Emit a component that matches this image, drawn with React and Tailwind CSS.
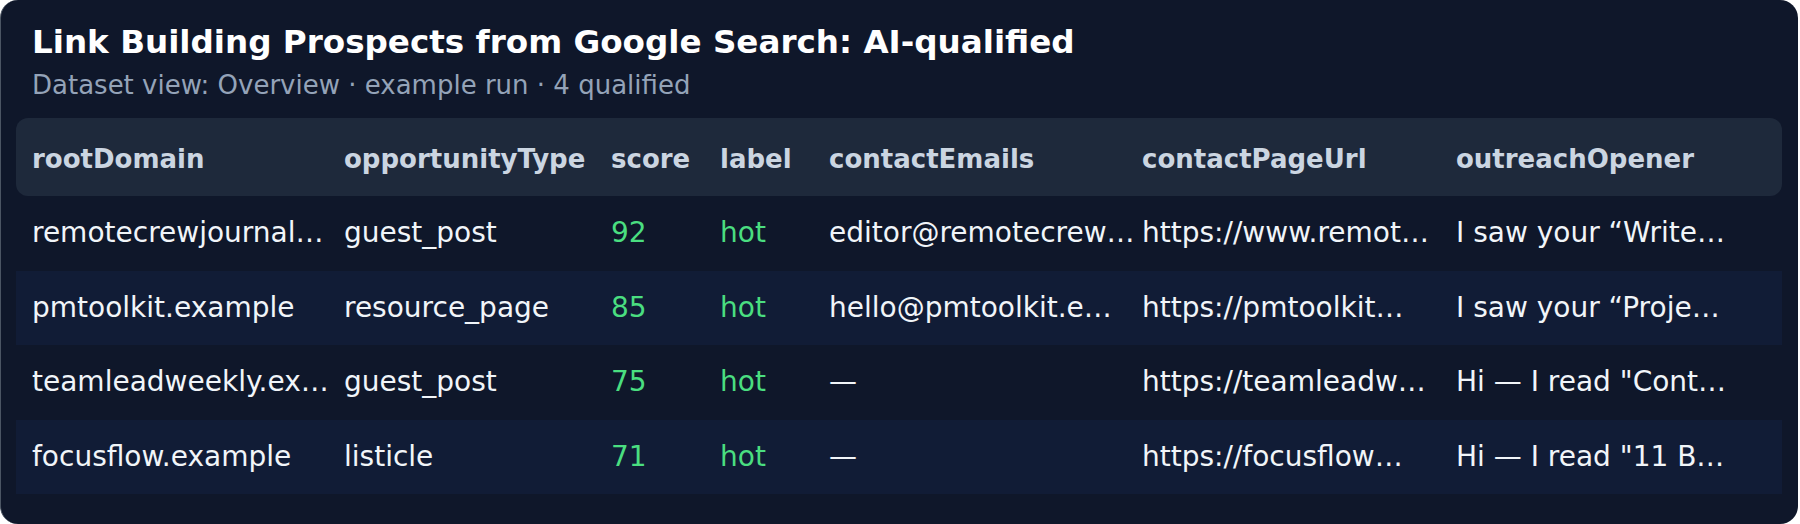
import React from 'react';

const cols = [
  { key: 'rootDomain', w: 'w-[312px]' },
  { key: 'opportunityType', w: 'w-[267px]' },
  { key: 'score', w: 'w-[109px]' },
  { key: 'label', w: 'w-[109px]' },
  { key: 'contactEmails', w: 'w-[313px]' },
  { key: 'contactPageUrl', w: 'w-[314px]' },
  { key: 'outreachOpener', w: 'flex-1' },
];

const rows = [
  ['remotecrewjournal.example', 'guest_post', 92, 'hot', 'editor@remotecrewjournal.example', 'https://www.remotecrewjournal.example/write-for-us', 'I saw your “Write for us” page'],
  ['pmtoolkit.example', 'resource_page', 85, 'hot', 'hello@pmtoolkit.example', 'https://pmtoolkit.example/contact', 'I saw your “Project management resources” list'],
  ['teamleadweekly.example', 'guest_post', 75, 'hot', '—', 'https://teamleadweekly.example/contact', 'Hi — I read "Contributor guidelines"'],
  ['focusflow.example', 'listicle', 71, 'hot', '—', 'https://focusflow.example/about', 'Hi — I read "11 Best tools"'],
];

// cut long values to 17 characters + ellipsis
const clip = (v) => {
  const s = String(v);
  return s.length > 17 ? s.slice(0, 17) + '…' : s;
};

export default function App() {
  return (
    <div className="h-[524px] w-full bg-white pr-[2px]" style={{ fontFamily: '"DejaVu Sans", sans-serif' }}>
      <div className="h-full w-full rounded-[18px] border-l border-[#4b5563] bg-[#0f172a] pl-[15px] pr-4">
        {/* Title */}
        <div className="px-4 pt-[22px]">
          <h1 className="text-[32.6px] leading-[40px] font-bold text-white">
            Link Building Prospects from Google Search: AI-qualified
          </h1>
          <p className="mt-[7px] text-[26px] leading-[32px] text-[#94a3b8]">
            Dataset view: Overview · example run · 4 qualified
          </p>
        </div>

        {/* Table */}
        <div className="mt-[17px]">
          <div className="flex h-[78px] items-center rounded-[12px] bg-[#1e293b] pt-1">
            {cols.map((c) => (
              <div key={c.key} className={`${c.w} shrink-0 whitespace-nowrap pl-4 text-[26px] leading-[32px] font-bold text-[#cbd5e1]`}>
                {c.key}
              </div>
            ))}
          </div>
          {rows.map((r, i) => (
            <div
              key={i}
              className={`flex h-[74.5px] items-center ${i % 2 === 1 ? 'bg-[#111c36]' : ''}`}
            >
              {r.map((v, j) => (
                <div
                  key={j}
                  className={`${cols[j].w} shrink-0 whitespace-nowrap pl-4 text-[28px] leading-[36px] ${j === 2 || j === 3 ? 'text-[#4ade80]' : 'text-[#f1f5f9]'}`}
                >
                  {clip(v)}
                </div>
              ))}
            </div>
          ))}
        </div>
      </div>
    </div>
  );
}
